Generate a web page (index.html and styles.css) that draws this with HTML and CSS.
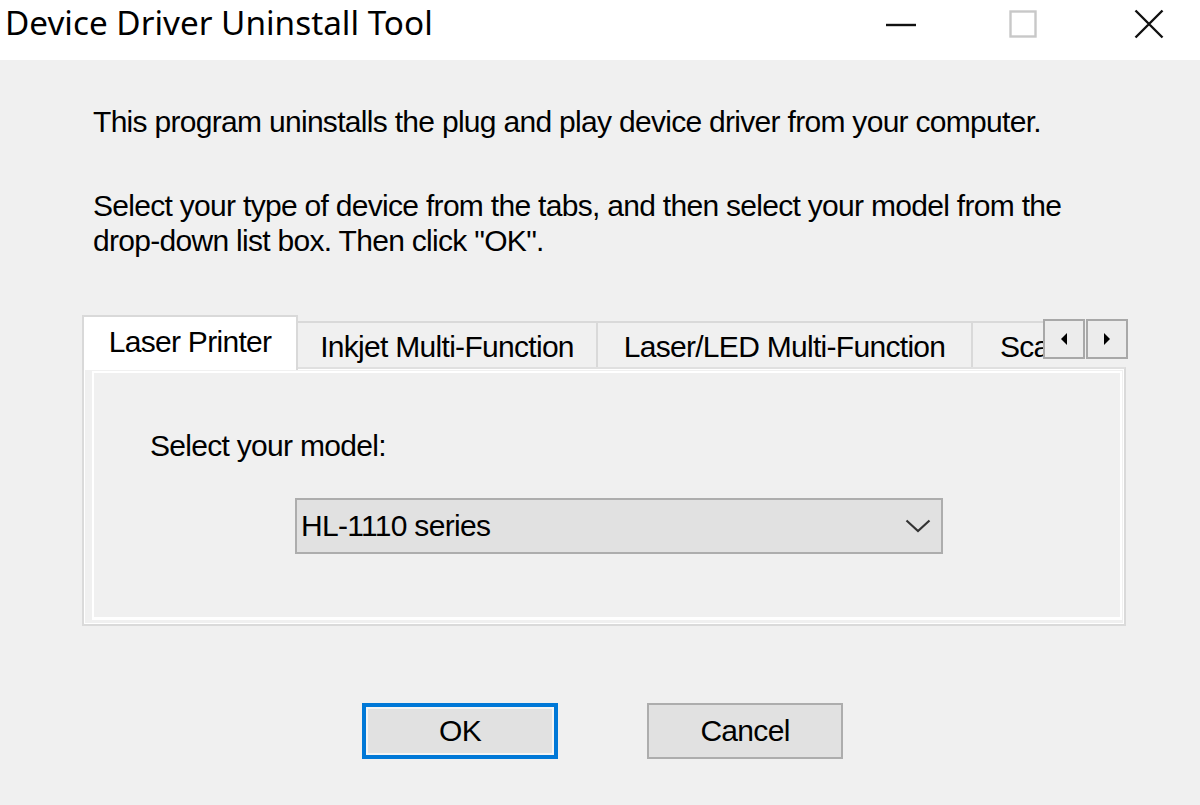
FILE: index.html
```html
<!DOCTYPE html>
<html>
<head>
<meta charset="utf-8">
<link rel="stylesheet" href="styles.css">
</head>
<body>
<div class="window">
  <div class="titlebar">
    <div class="title">Device Driver Uninstall Tool</div>
    <div class="controls">
      <div class="ctl ctl-min"><svg width="30" height="4" viewBox="0 0 30 4"><line x1="0" y1="2" x2="30" y2="2" stroke="#111" stroke-width="2.4"/></svg></div>
      <div class="ctl ctl-max"><svg width="28" height="28" viewBox="0 0 28 28"><rect x="1.5" y="1.5" width="25" height="25" fill="none" stroke="#c8c8c8" stroke-width="2.4"/></svg></div>
      <div class="ctl ctl-close"><svg width="30" height="30" viewBox="0 0 30 30"><path d="M1.5 1.5 L28.5 28.5 M28.5 1.5 L1.5 28.5" stroke="#111" stroke-width="2.4" fill="none"/></svg></div>
    </div>
  </div>
  <div class="client">
    <p class="msg msg1">This program uninstalls the plug and play device driver from your computer.</p>
    <p class="msg msg2">Select your type of device from the tabs, and then select your model from the<br>drop-down list box. Then click "OK".</p>

    <div class="tabs">
      <div class="tabstrip">
        <div class="tab tab-active">Laser Printer</div>
        <div class="tab tab-w1">Inkjet Multi-Function</div>
        <div class="tab tab-w2">Laser/LED Multi-Function</div>
        <div class="tab tab-w3">Scanner</div>
      </div>
      <div class="scroll">
        <div class="sbtn"><svg width="10" height="14" viewBox="0 0 10 14"><path d="M8 1 L2 7 L8 13 Z" fill="#000"/></svg></div>
        <div class="sbtn"><svg width="10" height="14" viewBox="0 0 10 14"><path d="M2 1 L8 7 L2 13 Z" fill="#000"/></svg></div>
      </div>
    </div>
    <div class="page">
      <div class="page-inner">
        <div class="label">Select your model:</div>
        <div class="combo">
          <span class="combo-text">HL-1110 series</span>
          <svg class="chev" width="26" height="14" viewBox="0 0 26 14"><path d="M1.5 1.5 L13 12 L24.5 1.5" fill="none" stroke="#333" stroke-width="2.2"/></svg>
        </div>
      </div>
    </div>
    <div class="buttons">
      <div class="btn btn-ok">OK</div>
      <div class="btn btn-cancel">Cancel</div>
    </div>
  </div>
</div>
</body>
</html>
```

FILE: styles.css
```css
html, body {
  margin: 0;
  padding: 0;
}
body {
  width: 1200px;
  height: 805px;
  overflow: hidden;
  background: #f0f0f0;
  font-family: "Liberation Sans", Arial, sans-serif;
  color: #000;
}
.window {
  width: 1200px;
  height: 805px;
  display: flex;
  flex-direction: column;
}
.titlebar {
  height: 60px;
  background: #fff;
  display: flex;
  align-items: flex-start;
  justify-content: space-between;
  flex-shrink: 0;
}
.title {
  font-family: "Noto Sans", "Open Sans", sans-serif;
  font-size: 33.3px;
  line-height: 44px;
  padding-left: 5px;
  padding-top: 0;
}
.controls {
  display: flex;
  align-items: center;
  height: 48px;
}
.ctl {
  width: 124px;
  height: 48px;
  display: flex;
  align-items: center;
  justify-content: center;
}
.ctl-min { width: 30px; margin-right: 93px; padding-top: 2px; }
.ctl-max { width: 28px; margin-right: 97px; }
.ctl-close { width: 30px; margin-right: 36px; }

.client {
  flex: 1;
  padding-left: 82px;
}
.msg {
  margin: 0;
  padding-left: 11px;
  font-size: 30px;
  line-height: 35px;
  letter-spacing: -0.7px;
}
.msg1 { margin-top: 44px; }
.msg2 { margin-top: 49px; }

.tabs {
  margin-top: 57px;
  width: 1047px;
  display: flex;
  align-items: flex-start;
  position: relative;
  z-index: 2;
  margin-bottom: -3px;
}
.tabstrip {
  width: 961px;
  overflow: hidden;
  display: flex;
  align-items: flex-start;
  flex-shrink: 0;
}
.tab {
  box-sizing: border-box;
  flex-shrink: 0;
  height: 46px;
  margin-top: 6px;
  border: 2px solid #d9d9d9;
  border-left: none;
  border-bottom: none;
  background: #f0f0f0;
  font-size: 30px;
  letter-spacing: -0.7px;
  display: flex;
  align-items: center;
  justify-content: center;
  padding-top: 4px;
  white-space: nowrap;
}
.tab-active {
  width: 216px;
  height: 55px;
  margin-top: 0;
  border-left: 2px solid #d9d9d9;
  background: #fff;
  padding-top: 0;
  padding-bottom: 4px;
}
.tab-w1 { width: 300px; }
.tab-w2 { width: 375px; }
.tab-w3 { width: 130px; justify-content: flex-start; padding-left: 27px; }
.scroll {
  display: flex;
  margin-top: 4px;
  gap: 1px;
}
.sbtn {
  box-sizing: border-box;
  width: 42px;
  height: 40px;
  border: 2px solid #a8a8a8;
  background: #ececec;
  display: flex;
  align-items: center;
  justify-content: center;
}

.page {
  box-sizing: border-box;
  width: 1044px;
  height: 259px;
  border: 2px solid #dadada;
  border-top-color: #e0e0e0;
  box-shadow: inset 0 0 0 1px #fff;
  padding: 2px 2px 4px 8px;
  background: #f0f0f0;
}
.page-inner {
  box-sizing: border-box;
  height: 100%;
  border-top: 2px solid #fff;
  border-left: 2px solid #fff;
  border-right: 2px solid #fff;
  border-bottom: 3px solid #fff;
  background: #f0f0f0;
  padding-left: 56px;
  padding-top: 55px;
}
.label {
  font-size: 30px;
  letter-spacing: -0.7px;
  line-height: 35px;
}
.combo {
  box-sizing: border-box;
  margin-top: 35px;
  margin-left: 145px;
  width: 648px;
  height: 56px;
  background: #e1e1e1;
  border: 2px solid #adadad;
  display: flex;
  align-items: center;
  justify-content: space-between;
  padding-left: 4px;
  padding-right: 10px;
}
.combo-text {
  font-size: 30px;
  letter-spacing: -0.7px;
}
.buttons {
  display: flex;
  margin-top: 77px;
  padding-left: 280px;
  gap: 89px;
}
.btn {
  box-sizing: border-box;
  width: 196px;
  height: 56px;
  background: #e1e1e1;
  border: 2px solid #adadad;
  display: flex;
  align-items: center;
  justify-content: center;
  font-size: 30px;
  letter-spacing: -0.7px;
}
.btn-ok {
  border: 4px solid #0078d7;
  box-shadow: inset 0 0 0 2px #f4f4f4;
}
```
